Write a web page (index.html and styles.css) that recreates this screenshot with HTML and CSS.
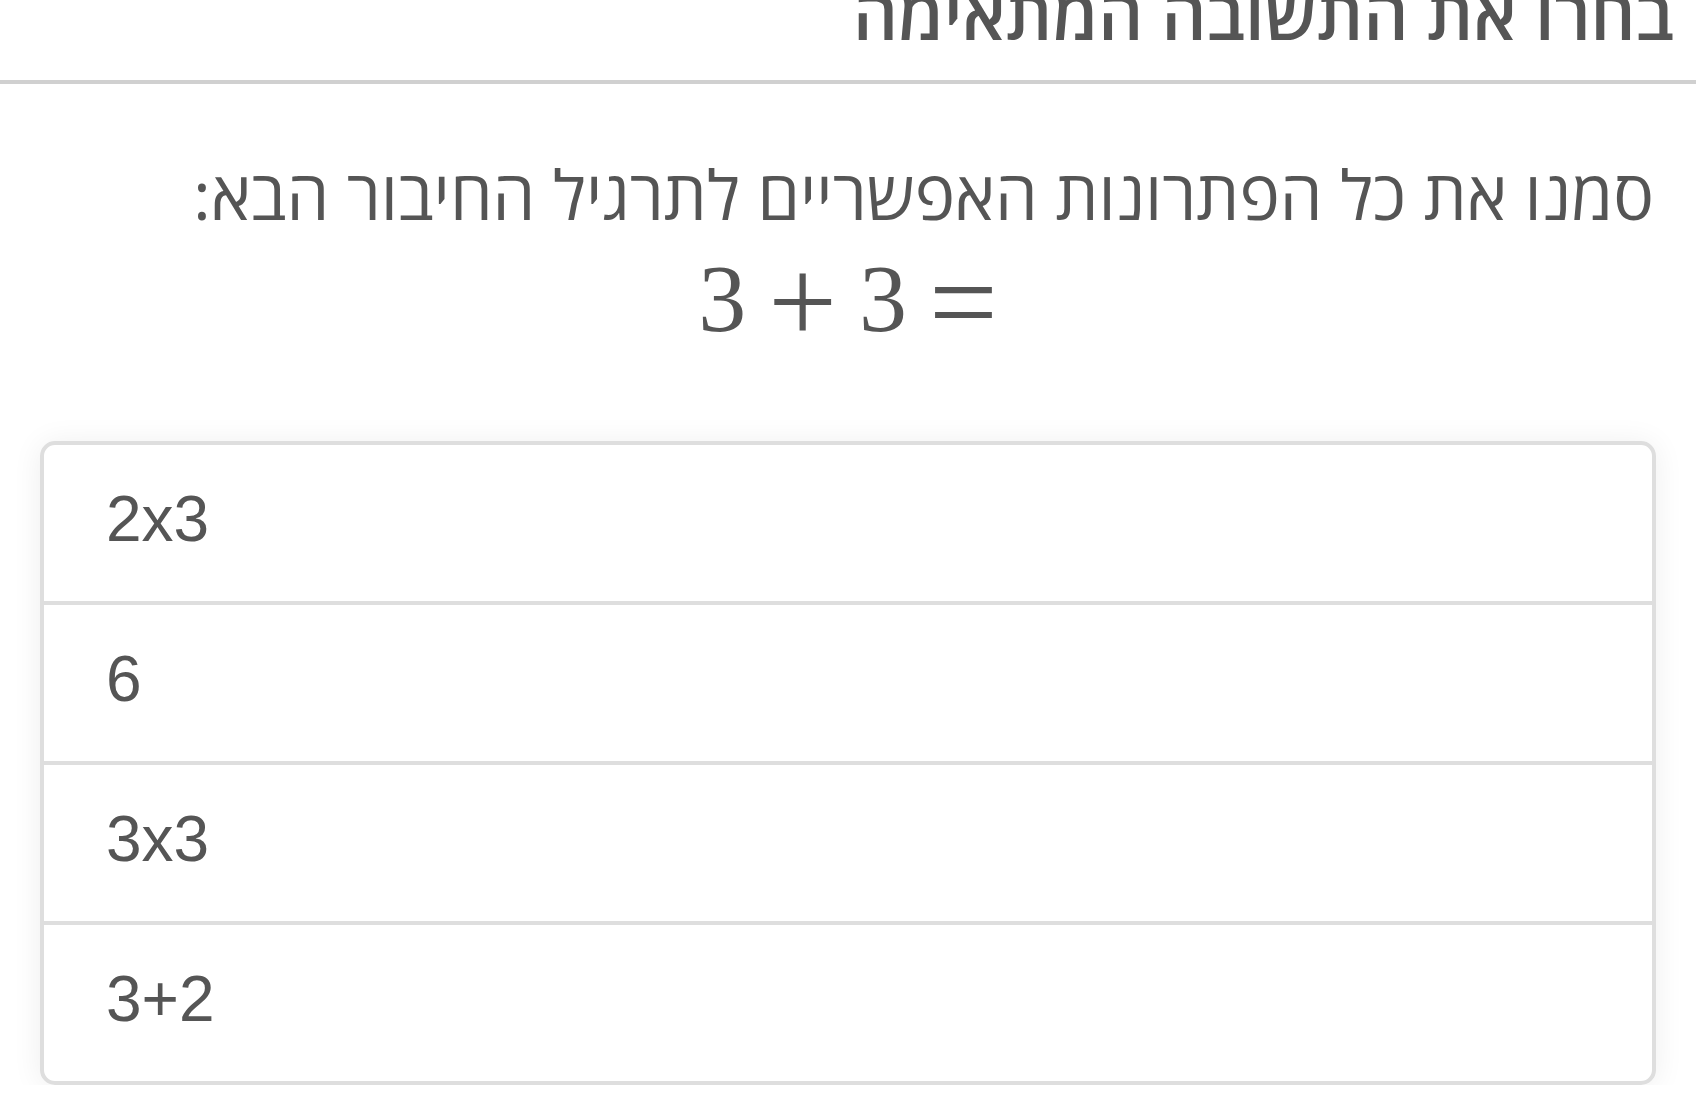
FILE: index.html
```html
<!DOCTYPE html>
<html lang="he" dir="rtl">
  <head>
    <meta charset="utf-8">
    <link rel="stylesheet" href="styles.css">
  </head>
  <body>
    <h1 class="title">בחרו את התשובה המתאימה</h1>

    <p class="question">סמנו את כל הפתרונות האפשריים לתרגיל החיבור הבא:</p>
    <div class="math" dir="ltr">
      <span class="num">3</span><span class="op">+</span><span class="num">3</span><span class="op">=</span>
    </div>

    <ul class="options" dir="ltr">
      <li class="option">2x3</li>
      <li class="option">6</li>
      <li class="option">3x3</li>
      <li class="option">3+2</li>
    </ul>
  </body>
</html>
```

FILE: styles.css
```css
body {
  margin: 0;
  font-family: "Open Sans", "Noto Sans", "DejaVu Sans", "Liberation Sans", sans-serif;
  color: #555;
  background: #fff;
}

.title {
  margin: -22px 0 0;
  padding: 0 22px 32px;
  font-size: 70px;
  font-weight: 600;
  line-height: 1;
  border-bottom: 4px solid #d0d0d0;
}

.question {
  margin: 76px 0 0;
  padding: 0 42px;
  font-size: 68px;
  line-height: 1;
}

.math {
  margin-top: 23px;
  text-align: center;
  font-family: "Liberation Serif", "DejaVu Serif", serif;
  font-size: 96px;
  line-height: 1;
}

.math .op {
  font-size: 122px;
  line-height: 0;
  margin: 0 22px;
  vertical-align: -12px;
}

.math .op:last-child {
  margin-right: 0;
}

.options {
  list-style: none;
  margin: 94px 40px 0;
  padding: 0;
  border: 4px solid #dedede;
  border-radius: 15px;
  box-shadow: 0 2px 30px rgba(0, 0, 0, 0.07);
  overflow: hidden;
}

.option {
  padding: 37px 62px 45px;
  font-family: "Liberation Sans", Arial, sans-serif;
  font-size: 64px;
  line-height: 74px;
  text-align: left;
}

.option + .option {
  border-top: 4px solid #dedede;
}
```
